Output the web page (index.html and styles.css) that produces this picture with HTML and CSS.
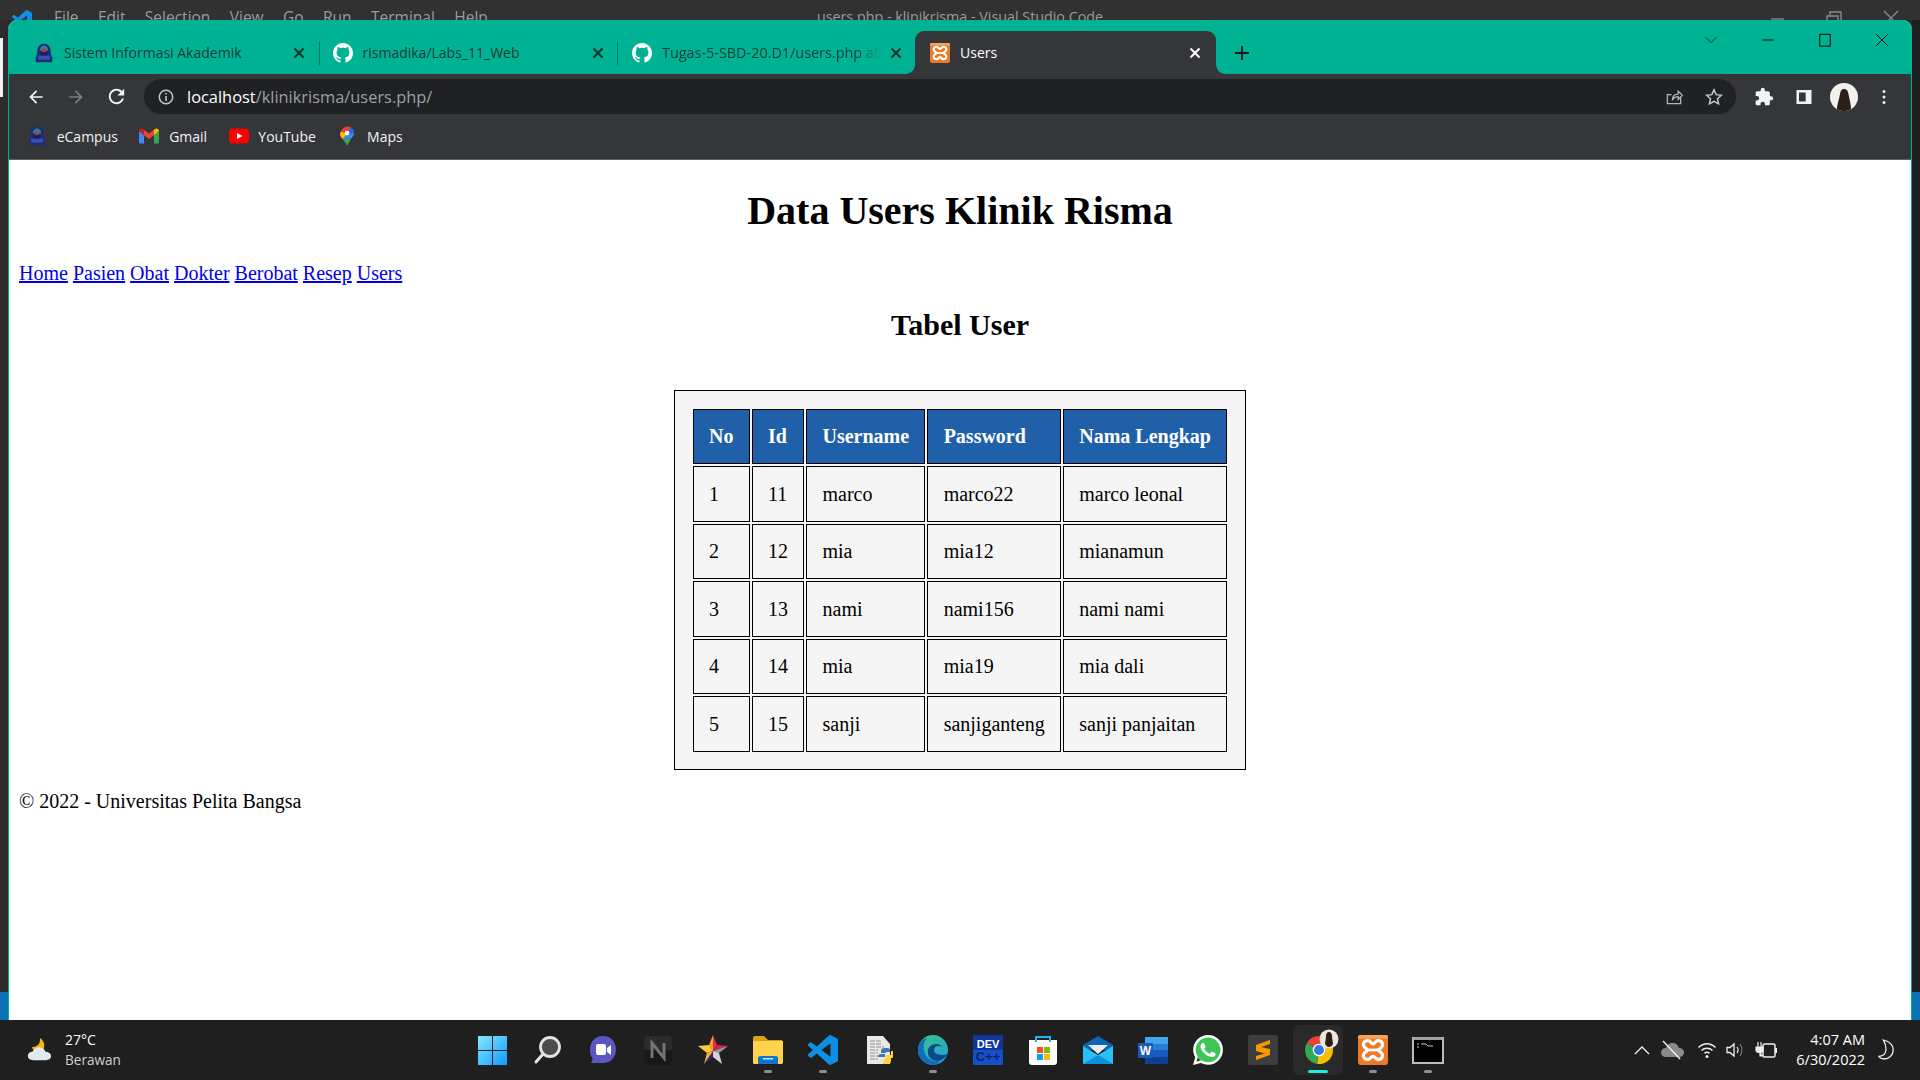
FILE: index.html
```html
<!DOCTYPE html>
<html lang="id">
<head>
<meta charset="utf-8">
<title>Users</title>
<link rel="stylesheet" href="styles.css">
</head>
<body>
<svg class="defs" aria-hidden="true">
  <symbol id="gh" viewBox="0 0 16 16"><path fill="#fff" d="M8 0C3.58 0 0 3.58 0 8c0 3.54 2.29 6.53 5.47 7.59.4.07.55-.17.55-.38 0-.19-.01-.82-.01-1.49-2.01.37-2.53-.49-2.69-.94-.09-.23-.48-.94-.82-1.13-.28-.15-.68-.52-.01-.53.63-.01 1.08.58 1.23.82.72 1.21 1.87.87 2.33.66.07-.52.28-.87.51-1.07-1.78-.2-3.64-.89-3.64-3.95 0-.87.31-1.59.82-2.15-.08-.2-.36-1.02.08-2.12 0 0 .67-.21 2.2.82.64-.18 1.32-.27 2-.27.68 0 1.36.09 2 .27 1.53-1.04 2.2-.82 2.2-.82.44 1.1.16 1.92.08 2.12.51.56.82 1.27.82 2.15 0 3.07-1.87 3.75-3.65 3.95.29.25.54.73.54 1.48 0 1.07-.01 1.93-.01 2.2 0 .21.15.46.55.38A8.013 8.013 0 0016 8c0-4.42-3.58-8-8-8z"/></symbol>
  <symbol id="vsc" viewBox="0 0 24 24"><path fill="#0f8fe3" d="M23.15 2.587L18.21.21a1.494 1.494 0 0 0-1.705.29l-9.46 8.63-4.12-3.128a.999.999 0 0 0-1.276.057L.327 7.261A1 1 0 0 0 .326 8.74L3.899 12 .326 15.26a1 1 0 0 0 .001 1.479L1.65 17.94a.999.999 0 0 0 1.276.057l4.12-3.128 9.46 8.63a1.492 1.492 0 0 0 1.704.29l4.942-2.377A1.5 1.5 0 0 0 24 20.06V3.939a1.5 1.5 0 0 0-.85-1.352zm-5.146 14.861L10.826 12l7.178-5.448v10.896z"/></symbol>
  <symbol id="xampp" viewBox="0 0 24 24"><rect width="24" height="24" rx="2.5" fill="#ee7a28"/><rect width="24" height="3" rx="1.5" fill="#f8a25c"/><path fill="none" stroke="#fff" stroke-width="2.6" stroke-linejoin="round" d="M8 4.500C10 4.500 10.500 7 12 7S14 4.500 16 4.500C19.500 4.500 20.500 7.500 19 9.500C18 10.800 16.500 11 16.500 12S18 13.200 19 14.500C20.500 16.500 19.500 19.500 16 19.500C14 19.500 13.500 17 12 17S10 19.500 8 19.500C4.500 19.500 3.500 16.500 5 14.500C6 13.200 7.500 13 7.500 12S6 10.800 5 9.500C3.500 7.500 4.500 4.500 8 4.500z"/><path stroke="#fff" stroke-width="2.200" d="M7.500 12h9"/></symbol>
  <symbol id="ecampus" viewBox="0 0 20 24"><path fill="#1f2d78" d="M10 1c5 0 8 4 8 9 0 3 1 6 2 8v5H0v-5c1-2 2-5 2-8 0-5 3-9 8-9z"/><path fill="#2f7f9f" d="M10 3c3 0 5 3 5 6H5c0-3 2-6 5-6z"/><circle cx="10" cy="9" r="2.500" fill="#c2362f"/><rect x="3" y="15" width="14" height="5" fill="#3a4fb0"/><rect x="6" y="11" width="8" height="4" fill="#15205c"/></symbol>
</svg>

<header class="vsbar">
  <svg class="vs-logo" viewBox="0 0 24 24"><use href="#vsc"/></svg>
  <nav class="vs-menu"><span>File</span><span>Edit</span><span>Selection</span><span>View</span><span>Go</span><span>Run</span><span>Terminal</span><span>Help</span></nav>
  <div class="vs-title">users.php - klinikrisma - Visual Studio Code</div>
  <div class="vs-ctrls">
    <svg viewBox="0 0 20 20"><path d="M4 11h13" stroke="#8a8a8a" stroke-width="1.400"/></svg>
    <svg viewBox="0 0 20 20"><path d="M3 8h11v11H3zM6 8V4h11v11h-3" fill="none" stroke="#8a8a8a" stroke-width="1.400"/></svg>
    <svg viewBox="0 0 20 20"><path d="M3 3l14 14M17 3L3 17" stroke="#8a8a8a" stroke-width="1.400"/></svg>
  </div>
</header>

<div class="desktop">
  <div class="edge">
    <div class="edge-note"></div>
    <div class="edge-status"></div>
  </div>

  <div class="window">
    <div class="tabstrip">
      <div class="tab">
        <svg class="fav"><use href="#ecampus"/></svg>
        <span class="tab-title">Sistem Informasi Akademik</span>
        <svg class="tab-x" viewBox="0 0 16 16"><path d="M3.500 3.500l9 9M12.500 3.500l-9 9" stroke="#12312c" stroke-width="2"/></svg>
      </div>
      <span class="tab-sep"></span>
      <div class="tab tab-next">
        <svg class="fav"><use href="#gh"/></svg>
        <span class="tab-title">rismadika/Labs_11_Web</span>
        <svg class="tab-x" viewBox="0 0 16 16"><path d="M3.500 3.500l9 9M12.500 3.500l-9 9" stroke="#12312c" stroke-width="2"/></svg>
      </div>
      <span class="tab-sep"></span>
      <div class="tab tab-next tab-last">
        <svg class="fav"><use href="#gh"/></svg>
        <span class="tab-title tab-fade">Tugas-5-SBD-20.D1/users.php at</span>
        <svg class="tab-x" viewBox="0 0 16 16"><path d="M3.500 3.500l9 9M12.500 3.500l-9 9" stroke="#12312c" stroke-width="2"/></svg>
      </div>
      <div class="tab tab-active">
        <svg class="fav"><use href="#xampp"/></svg>
        <span class="tab-title">Users</span>
        <svg class="tab-x" viewBox="0 0 16 16"><path d="M3.500 3.500l9 9M12.500 3.500l-9 9" stroke="#fff" stroke-width="2"/></svg>
      </div>
      <svg class="newtab" viewBox="0 0 16 16"><path d="M8 1v14M1 8h14" stroke="#10201d" stroke-width="2"/></svg>
      <div class="winctrls">
        <div class="winctrl"><svg viewBox="0 0 16 16"><path d="M2 5l6 6 6-6" fill="none" stroke="#10201d"/></svg></div>
        <div class="winctrl"><svg viewBox="0 0 16 16"><path d="M1.500 8h13" stroke="#000" stroke-width="1.100"/></svg></div>
        <div class="winctrl"><svg viewBox="0 0 16 16"><rect x="2" y="1.500" width="12" height="13.500" fill="none" stroke="#000" stroke-width="1.100"/></svg></div>
        <div class="winctrl"><svg viewBox="0 0 16 16"><path d="M1.500 1.500l13 13M14.500 1.500l-13 13" stroke="#000"/></svg></div>
      </div>
    </div>

    <div class="toolbar">
      <div class="tbtn"><svg viewBox="0 0 24 24"><path fill="#f1f3f4" d="M20 11H7.830l5.590-5.590L12 4l-8 8 8 8 1.410-1.410L7.830 13H20v-2z"/></svg></div>
      <div class="tbtn"><svg viewBox="0 0 24 24"><path fill="#7b7d80" d="M4 11h12.170l-5.590-5.590L12 4l8 8-8 8-1.410-1.410L16.170 13H4v-2z"/></svg></div>
      <div class="tbtn tbtn-reload"><svg viewBox="0 0 24 24"><path fill="#f1f3f4" d="M17.650 6.350C16.200 4.900 14.210 4 12 4c-4.420 0-7.990 3.580-7.990 8s3.570 8 7.990 8c3.730 0 6.840-2.550 7.730-6h-2.080c-.82 2.330-3.040 4-5.650 4-3.310 0-6-2.690-6-6s2.690-6 6-6c1.660 0 3.140.69 4.220 1.780L13 11h7V4l-2.350 2.350z"/></svg></div>
      <div class="omnibox">
        <svg class="omni-info" viewBox="0 0 20 20"><circle cx="10" cy="10" r="6.700" fill="none" stroke="#c4c7c9" stroke-width="1.500"/><path d="M10 9v5M10 6v1.600" stroke="#c4c7c9" stroke-width="1.600"/></svg>
        <span class="url"><span class="url-host">localhost</span>/klinikrisma/users.php/</span>
        <div class="omni-actions">
          <div class="tbtn"><svg viewBox="0 0 24 24"><path fill="none" stroke="#b5b7ba" stroke-width="1.500" d="M20 11v9H4V9h5M10 16c0-5 3-7.500 7-7.500V5l5 5-5 5v-3.500c-3 0-5.500 1-7 4.500z"/></svg></div>
          <div class="tbtn"><svg viewBox="0 0 24 24"><path fill="none" stroke="#c4c7c9" stroke-width="1.800" d="M12 3.500l2.600 5.700 6.200.7-4.600 4.200 1.300 6.100-5.500-3.100-5.500 3.100 1.300-6.100-4.600-4.200 6.200-.7z"/></svg></div>
        </div>
      </div>
      <div class="tb-right">
        <div class="tbtn"><svg viewBox="0 0 24 24"><path fill="#f1f3f4" d="M20.500 11H19V7c0-1.100-.9-2-2-2h-4V3.500C13 2.120 11.880 1 10.500 1S8 2.120 8 3.500V5H4c-1.100 0-1.990.9-1.990 2v3.800H3.500c1.490 0 2.700 1.210 2.700 2.700s-1.210 2.700-2.700 2.700H2V20c0 1.100.9 2 2 2h3.800v-1.500c0-1.490 1.210-2.700 2.700-2.700 1.490 0 2.700 1.210 2.700 2.700V22H17c1.100 0 2-.9 2-2v-4h1.500c1.380 0 2.500-1.120 2.500-2.500S21.880 11 20.500 11z"/></svg></div>
        <div class="tbtn"><svg viewBox="0 0 24 24"><path fill="#f1f3f4" fill-rule="evenodd" d="M3 3.500h18v17H3zM6 6.500v11h8v-11z"/></svg></div>
        <div class="tbtn"><svg class="avatar" viewBox="0 0 28 28"><circle cx="14" cy="14" r="14" fill="#f4f1ec"/><path fill="#2c1e18" d="M14 6c3 0 4 2 4.500 5 .4 3 2.500 10 2.500 15-2 1.500-4.500 2-7 2s-5-.5-7-2c0-4 2.500-11 3-15 .4-3 1.500-5 4-5z"/></svg></div>
        <div class="tbtn"><svg viewBox="0 0 24 24"><circle cx="12" cy="5.500" r="1.800" fill="#f1f3f4"/><circle cx="12" cy="12" r="1.800" fill="#f1f3f4"/><circle cx="12" cy="18.500" r="1.800" fill="#f1f3f4"/></svg></div>
      </div>
    </div>

    <div class="bookmarks">
      <div class="bm"><svg class="fav"><use href="#ecampus"/></svg><span>eCampus</span></div>
      <div class="bm"><svg class="fav" viewBox="0 0 24 18"><path fill="#4285f4" d="M0 3v13.500C0 17.300.7 18 1.500 18H6V8z"/><path fill="#34a853" d="M24 3v13.500c0 .8-.7 1.500-1.500 1.500H18V8z"/><path fill="#ea4335" d="M6 8V1.500L12 6l6-4.500V8l-6 4.500z"/><path fill="#c5221f" d="M0 3c0-2.500 2.800-3.800 4.800-2.300L6 1.500V8z"/><path fill="#fbbc04" d="M24 3c0-2.500-2.800-3.800-4.800-2.300L18 1.500V8z"/></svg><span>Gmail</span></div>
      <div class="bm"><svg class="fav" viewBox="0 0 20 20"><rect y="2.500" width="20" height="15" rx="4" fill="#f00"/><path d="M8 7l5.500 3L8 13z" fill="#fff"/></svg><span>YouTube</span></div>
      <div class="bm"><svg class="fav" viewBox="0 0 20 24"><path fill="#34a853" d="M5 16c2 3 4 5 5 8l5-9z"/><path fill="#fbbc04" d="M3 6c-2 3-2 6 2 10l5-6z"/><path fill="#4285f4" d="M10 10l-5 6 10-1c2-2 3-3 3.500-6L16 4z"/><path fill="#ea4335" d="M3 6C5 1 11-1 15 2l-5 8z"/><path fill="#1a73e8" d="M15 2c3 2 4 4 3.500 7L10 10z"/><circle cx="10" cy="8.500" r="2.800" fill="#fff"/></svg><span>Maps</span></div>
    </div>

    <main class="page">
      <h1 class="page-title">Data Users Klinik Risma</h1>
      <nav class="page-nav">
        <a href="#">Home</a>
        <a href="#">Pasien</a>
        <a href="#">Obat</a>
        <a href="#">Dokter</a>
        <a href="#">Berobat</a>
        <a href="#">Resep</a>
        <a href="#">Users</a>
      </nav>
      <h2 class="page-sub">Tabel User</h2>
      <table class="users">
        <thead>
          <tr><th>No</th><th>Id</th><th>Username</th><th>Password</th><th>Nama Lengkap</th></tr>
        </thead>
        <tbody>
          <tr><td>1</td><td>11</td><td>marco</td><td>marco22</td><td>marco leonal</td></tr>
          <tr><td>2</td><td>12</td><td>mia</td><td>mia12</td><td>mianamun</td></tr>
          <tr><td>3</td><td>13</td><td>nami</td><td>nami156</td><td>nami nami</td></tr>
          <tr><td>4</td><td>14</td><td>mia</td><td>mia19</td><td>mia dali</td></tr>
          <tr><td>5</td><td>15</td><td>sanji</td><td>sanjiganteng</td><td>sanji panjaitan</td></tr>
        </tbody>
      </table>
      <p class="page-foot">© 2022 - Universitas Pelita Bangsa</p>
    </main>
  </div>

  <div class="edge edge-right">
    <div class="edge-status"></div>
  </div>
</div>

<footer class="taskbar">
  <div class="weather">
    <svg class="weather-ico" viewBox="0 0 28 28"><path fill="#f7b500" d="M15 1c1 6-3 10-9 10 2 4 8 6 12 3 3-3 2-10-3-13z"/><path fill="#dfe9f2" d="M8 25c-4 0-6-2-6-4.500S4 16 7 16c1-3 4-5 7-5 4 0 6 2 7 5 3 0 6 2 6 4.500S25 25 21 25z"/></svg>
    <div class="weather-text"><span class="weather-temp">27°C</span><span class="weather-desc">Berawan</span></div>
  </div>

  <div class="apps">
    <div class="app"><svg viewBox="0 0 30 30"><defs><linearGradient id="win" x1="0" y1="0" x2="1" y2="1"><stop offset="0" stop-color="#86e8ff"/><stop offset="1" stop-color="#0c9bff"/></linearGradient></defs><path fill="url(#win)" d="M0 1h14v14H0zM15 1h14v14H15zM0 16h14v14H0zM15 16h14v14H15z"/></svg></div>
    <div class="app"><svg viewBox="0 0 30 30"><circle cx="17" cy="12" r="9.500" fill="#4c4c4c" stroke="#e3e3e3" stroke-width="2.800"/><path d="M10 19l-7 8" stroke="#e3e3e3" stroke-width="3" stroke-linecap="round"/></svg></div>
    <div class="app"><svg viewBox="0 0 30 30"><path fill="#5b57c2" d="M15 1c8 0 13 6 13 13.500S23 28 15 28H3c1-1.500 1.500-3 1.500-5C2.500 21 2 18 2 14.500 2 7 7 1 15 1z"/><rect x="8" y="9" width="10" height="11" rx="2" fill="#fff"/><path d="M19 13l4-3v10l-4-3z" fill="#fff"/></svg></div>
    <div class="app"><svg viewBox="0 0 30 30"><path fill="#2b2b2b" d="M3 1h24l2 3v11H1V4z"/><path fill="#181818" d="M1 15h28v10l-2 5H3l-2-5z"/><path fill="none" stroke="#747474" stroke-width="3" d="M9 23V8l12 15V8"/></svg></div>
    <div class="app"><svg viewBox="0 0 30 30"><path fill="#ffc83a" d="M0 11l11-1 4 6-6 2z"/><path fill="#f5a91f" d="M15 0v16l-4-6z"/><path fill="#e0285a" d="M15 0l4 10-4 6z"/><path fill="#d8224e" d="M19 10l11 1-15 5z"/><path fill="#9a9a9a" d="M30 11l-9 7-6-2z"/><path fill="#d5d5d5" d="M21 18l3 11-9-7v-6z"/><path fill="#5a2ca0" d="M15 16v6l-9 7z"/><path fill="#3a1f80" d="M15 22l-9 7 3-11 6-2z"/><path fill="#f3b52a" d="M9 18l-3 11 9-13z"/></svg></div>
    <div class="app app-open"><svg viewBox="0 0 30 30"><path fill="#d9a40f" d="M0 3c0-1 1-2 2-2h9l4 4h14v4H0z"/><path fill="#ffd34e" d="M0 6h30v21c0 1-1 2-1 2H1c-1 0-1-1-1-2z"/><path fill="#0f75c9" d="M5 23c0-1 1-2 2-2h16c1 0 2 1 2 2v6H5z"/><rect x="10" y="23" width="10" height="1.500" fill="#bfe4ff"/></svg><i class="ind"></i></div>
    <div class="app app-open"><svg viewBox="0 0 24 24"><use href="#vsc"/></svg><i class="ind"></i></div>
    <div class="app"><svg viewBox="0 0 30 30"><path fill="#e8e8e8" d="M4 1h16l7 8v20H4z"/><path stroke="#8f8f8f" stroke-dasharray="5 1" d="M7 6h11M7 9h11M7 12h14M7 15h8M7 18h8M7 21h8M7 24h8"/><path fill="#3b78b0" d="M22 13c-3 0-4 1-4 3v2h4v1h-4c-2 0-3 1-3 3h7v-3c0-1 1-2 2-2h3v-2c0-2-2-2-5-2z"/><path fill="#ffd43b" d="M24 29c3 0 4-1 4-3v-3h-4c-1 0-3 .5-3 2v1h-1v3z"/><path fill="#ffd43b" d="M28 16h2v6c0 1-1 1-2 1h-5v-3h5z"/></svg></div>
    <div class="app app-open"><svg viewBox="0 0 30 30"><defs><linearGradient id="edge1" x1="0" y1="0" x2="1" y2="1"><stop offset="0" stop-color="#3ac77c"/><stop offset="1" stop-color="#1c9ee0"/></linearGradient></defs><circle cx="15" cy="15" r="15" fill="url(#edge1)"/><path fill="#0f6cc0" d="M15 30C6 30 0 23 0 15 0 9 4 4 9 3c-3 3-4 7-3 12 1 7 6 11 11 11 3 0 5-1 6-1-2 3-5 5-8 5z"/><path fill="#0b4a8a" d="M23 25c-6 2-12 0-13-7-1-5 3-9 8-9 3 0 5 1 6 3-3-2-8-1-8 3 0 4 5 5 9 5 3 0 4-1 5-2-1 3-3 5-7 7z"/></svg><i class="ind"></i></div>
    <div class="app"><svg viewBox="0 0 30 30"><rect width="30" height="30" fill="#10359a"/><rect y="15" width="30" height="15" fill="#1550c8"/><text x="15" y="12.500" class="ico-dev">DEV</text><text x="15" y="26" class="ico-cpp">C++</text></svg></div>
    <div class="app"><svg viewBox="0 0 30 30"><path fill="#fff" d="M1 5h28v22c0 2-1 3-3 3H4c-2 0-3-1-3-3z"/><path fill="none" stroke="#1cb5f0" stroke-width="2" d="M8 7V2h14v5"/><rect x="9" y="12" width="6" height="6" fill="#f25022"/><rect x="16" y="12" width="6" height="6" fill="#7fba00"/><rect x="9" y="19" width="6" height="6" fill="#00a4ef"/><rect x="16" y="19" width="6" height="6" fill="#ffb900"/></svg></div>
    <div class="app"><svg viewBox="0 0 30 30"><path fill="#0f63b5" d="M15 1L0 10v5h30v-5z"/><path fill="#e9eef4" d="M5 10h20l-10 9z"/><path fill="#29c0f4" d="M0 11l15 9 15-9v18H0z"/><path fill="#0f8fdc" d="M0 29l15-9 15 9z"/></svg></div>
    <div class="app"><svg viewBox="0 0 30 30"><rect x="7" y="2" width="23" height="27" rx="1.500" fill="#2b7cd3"/><rect x="7" y="2" width="23" height="7" fill="#41a5ee"/><rect x="7" y="15" width="23" height="7" fill="#185abd"/><rect x="7" y="22" width="23" height="7" fill="#103f91"/><rect y="8" width="15" height="15" rx="1" fill="#185abd"/><text x="7.500" y="20" class="ico-w">W</text></svg></div>
    <div class="app"><svg viewBox="0 0 24 24"><circle cx="12" cy="12" r="10.500" fill="#3ec654"/><path fill="#fff" d="M17.472 14.382c-.297-.149-1.758-.867-2.030-.967-.273-.099-.471-.148-.670.150-.197.297-.767.966-.940 1.164-.173.199-.347.223-.644.075-.297-.150-1.255-.463-2.390-1.475-.883-.788-1.480-1.761-1.653-2.059-.173-.297-.018-.458.130-.606.134-.133.298-.347.446-.520.149-.174.198-.298.298-.497.099-.198.050-.371-.025-.520-.075-.149-.669-1.612-.916-2.207-.242-.579-.487-.500-.669-.510-.173-.008-.371-.010-.570-.010-.198 0-.520.074-.792.372-.272.297-1.040 1.016-1.040 2.479 0 1.462 1.065 2.875 1.213 3.074.149.198 2.096 3.200 5.077 4.487.709.306 1.262.489 1.694.625.712.227 1.360.195 1.871.118.571-.085 1.758-.719 2.006-1.413.248-.694.248-1.289.173-1.413-.074-.124-.272-.198-.570-.347m-5.421 7.403h-.004a9.870 9.870 0 01-5.031-1.378l-.361-.214-3.741.982.998-3.648-.235-.374a9.860 9.860 0 01-1.510-5.260c.001-5.450 4.436-9.884 9.888-9.884 2.640 0 5.122 1.030 6.988 2.898a9.825 9.825 0 012.893 6.994c-.003 5.450-4.437 9.884-9.885 9.884m8.413-18.297A11.815 11.815 0 0012.050 0C5.495 0 .160 5.335.157 11.892c0 2.096.547 4.142 1.588 5.945L.057 24l6.305-1.654a11.882 11.882 0 005.683 1.448h.005c6.554 0 11.890-5.335 11.893-11.893a11.821 11.821 0 00-3.480-8.413z"/></svg></div>
    <div class="app"><svg viewBox="0 0 30 30"><rect width="30" height="30" rx="2" fill="#3d3d3d"/><path fill="#ff9800" d="M22 5L8 10v6l14 4v-6L13 12l9-3zM8 25l14-5v-3L8 21z"/></svg></div>
    <div class="app app-chrome"><svg viewBox="0 0 30 30"><path fill="#ea4335" d="M16 15L3.880 8A14 14 0 0 1 29.500 11z"/><path fill="#fbbc04" d="M16 15L29.500 11A14 14 0 0 1 14 28.900z"/><path fill="#34a853" d="M16 15L14 28.900A14 14 0 0 1 3.880 8z"/><circle cx="16" cy="15" r="6.300" fill="#fff"/><circle cx="16" cy="15" r="5" fill="#2a7de1"/><circle cx="26" cy="4" r="9.500" fill="#ece6df"/><path fill="#2c1e18" d="M26-3c2 0 3 2 3 4 0 3 1 6 1 8-1 1-2 3-4 3s-3-2-4-3c0-2 1-5 1-8 0-2 1-4 3-4z"/></svg><i class="ind ind-live"></i></div>
    <div class="app app-open"><svg viewBox="0 0 24 24"><use href="#xampp"/></svg><i class="ind"></i></div>
    <div class="app app-open"><svg viewBox="0 0 30 30"><rect y="3" width="30" height="25" fill="#000" stroke="#b8bcc0" stroke-width="2"/><rect y="2" width="30" height="3" fill="#9aa0a5"/><path d="M4 9h2M8 9h5l2 2h5M4 12h2" stroke="#c8c8c8"/></svg><i class="ind"></i></div>
  </div>

  <div class="tray">
    <svg class="tray-ico" viewBox="0 0 20 20"><path d="M3 14l7-7 7 7" fill="none" stroke="#eee" stroke-width="1.300"/></svg>
    <svg class="tray-ico tray-cloud" viewBox="0 0 24 20"><path fill="#8a8a8a" d="M6 17c-3 0-5-2-5-4.500S3 8 6 8c1-3 3-5 6-5 4 0 6 2 7 5 3 0 5 2 5 4.500S22 17 19 17z"/><path d="M3 1l17 18" stroke="#eee" stroke-width="1.500"/></svg>
    <svg class="tray-ico" viewBox="0 0 20 20"><path d="M1.500 7.500c5-5 12-5 17 0M4.500 10.500c3-3 8-3 11 0M7.500 13.300c1.500-1.200 3.500-1.200 5 0" fill="none" stroke="#eee" stroke-width="1.500"/><circle cx="10" cy="16.500" r="1.500" fill="#eee"/></svg>
    <svg class="tray-ico tray-sound" viewBox="0 0 20 20"><path d="M2 7.500h3l4-3.500v12l-4-3.500H2z" fill="none" stroke="#eee" stroke-width="1.300"/><path d="M12 7c1.300 1.700 1.300 4.300 0 6" fill="none" stroke="#eee" stroke-width="1.200"/><path d="M15 4c2.500 3.500 2.500 8.500 0 12" fill="none" stroke="#777" stroke-width="1.200"/></svg>
    <svg class="tray-ico tray-batt" viewBox="0 0 24 20"><rect x="8" y="4" width="12" height="13" rx="1.500" fill="none" stroke="#eee" stroke-width="1.500"/><rect x="20" y="8" width="2" height="5" fill="#eee"/><path d="M1 7h7v3c0 1.500-1.500 2.500-3.500 2.500S1 11.500 1 10zM3 2v5M6 2v5M5 12v4h3" fill="#eee" stroke="#eee" stroke-width="1.200"/></svg>
    <div class="clock"><span>4:07 AM</span><span>6/30/2022</span></div>
    <svg class="tray-moon" viewBox="0 0 20 24"><path d="M7 1c6 1 11 5 11 11 0 6-5 10-10 10-3 0-5-1-6-3 5 0 8-3 8-8 0-4-1-7-3-10z" fill="none" stroke="#eee" stroke-width="1.400"/></svg>
  </div>
</footer>
</body>
</html>
```

FILE: styles.css
```css
* { box-sizing: border-box; }
html, body { margin: 0; padding: 0; }
body {
  width: 1920px;
  height: 1080px;
  overflow: hidden;
  display: flex;
  flex-direction: column;
  background: #2b2b2b;
  font-family: "Open Sans", "Noto Sans", sans-serif;
}
.defs { position: absolute; width: 0; height: 0; }

/* VS Code window peeking out behind the browser */
.vsbar {
  height: 20px;
  flex: none;
  display: flex;
  background: #313131;
  color: #9b9b9b;
  font-size: 15.500px;
  line-height: 20px;
  overflow: hidden;
  position: relative;
}
.vs-logo { width: 20px; height: 20px; margin: 10px 0 0 12px; flex: none; }
.vs-menu { display: flex; margin: 7px 0 0 22px; gap: 19.400px; height: 28px; }
.vs-title { position: absolute; left: 0; right: 0; top: 7px; text-align: center; font-size: 14.300px; }
.vs-ctrls { margin: 8px 19px 0 auto; display: flex; gap: 37px; }
.vs-ctrls svg { width: 20px; height: 20px; }

.desktop { flex: 1; display: flex; min-height: 0; }
.edge {
  width: 8px;
  flex: none;
  display: flex;
  flex-direction: column;
  background: #2c2c2c;
}
.edge-right { background: #1e1e1e; }
.edge-note { width: 3px; height: 59px; margin-top: 18px; background: #f2f2f2; }
.edge-status { height: 28px; margin-top: auto; background: #0b72b5; }

/* Browser window */
.window {
  flex: 1;
  min-width: 0;
  display: flex;
  flex-direction: column;
  border-left: 1px solid #00b294;
  border-right: 1px solid #00b294;
  border-radius: 9px 9px 0 0;
  overflow: hidden;
  background: #fff;
}
.tabstrip {
  height: 54px;
  flex: none;
  display: flex;
  align-items: flex-end;
  padding-left: 11px;
  background: #00b294;
}
.tab {
  width: 298.500px;
  height: 43px;
  flex: none;
  display: flex;
  align-items: center;
  gap: 10px;
  padding: 0 11.500px 0 14px;
  color: #123d37;
  font-size: 14px;
}
.tab-next { width: 297.500px; padding-left: 13px; }
.tab-last { width: 296.500px; padding-left: 14px; padding-right: 10.500px; }
.tab-sep { width: 1px; height: 24px; margin-bottom: 9px; background: #0a6f5f; flex: none; }
.tab-title { flex: 1; min-width: 0; white-space: nowrap; overflow: hidden; }
.tab-last .tab-title { font-size: 14.400px; }
.tab-fade { -webkit-mask-image: linear-gradient(to right, #000 195px, transparent 218px); mask-image: linear-gradient(to right, #000 195px, transparent 218px); }
.fav { width: 20px; height: 20px; flex: none; }
.tab-x { width: 16px; height: 16px; flex: none; }
.tab-active {
  width: 301px;
  padding: 0 12.500px 0 15.500px;
  position: relative;
  background: #35363a;
  border-radius: 9px 9px 0 0;
  color: #fff;
}
.tab-active::before, .tab-active::after {
  content: "";
  position: absolute;
  bottom: 0;
  width: 9px;
  height: 9px;
}
.tab-active::before { right: 100%; background: radial-gradient(circle at 0 0, transparent 8.500px, #35363a 9px); }
.tab-active::after { left: 100%; background: radial-gradient(circle at 100% 0, transparent 8.500px, #35363a 9px); }
.newtab { width: 16px; height: 16px; flex: none; margin: 0 0 13.500px 18.500px; }
.winctrls { margin: 0 1px 0 auto; display: flex; align-self: flex-start; }
.winctrl { width: 57px; height: 40px; display: flex; align-items: center; justify-content: center; }
.winctrl svg { width: 14px; height: 14px; }

.toolbar {
  height: 40px;
  flex: none;
  display: flex;
  align-items: flex-end;
  padding: 0 7px;
  background: #35363a;
}
.tbtn {
  width: 40px;
  height: 35px;
  flex: none;
  display: flex;
  align-items: center;
  justify-content: center;
}
.tbtn svg { width: 20px; height: 20px; }
.tbtn-reload svg { width: 23px; height: 23px; }
.tbtn svg.avatar { width: 28px; height: 28px; }
.omnibox {
  flex: 1;
  min-width: 0;
  height: 35px;
  margin-left: 8px;
  display: flex;
  align-items: center;
  padding: 0 2px 0 12px;
  background: #202124;
  border-radius: 18px;
}
.omni-info { width: 20px; height: 20px; flex: none; }
.url { margin-left: 11px; color: #9aa0a6; font-size: 16.400px; }
.url-host { color: #fff; }
.omni-actions { margin-left: auto; display: flex; }
.tb-right { display: flex; margin-left: 8px; }

.bookmarks {
  height: 46px;
  flex: none;
  display: flex;
  align-items: center;
  gap: 21.500px;
  padding: 0 0 1px 18px;
  background: #35363a;
  border-bottom: 1px solid #5f6063;
  color: #f1f3f4;
  font-size: 14px;
}
.bm { display: flex; align-items: center; gap: 9.700px; }

/* Page content */
.page {
  flex: 1;
  min-height: 0;
  padding: 0 10px;
  background: #fff;
  color: #000;
  font-family: "Liberation Serif", "Times New Roman", serif;
  font-size: 20px;
}
.page-title { margin: 26.800px 0 28px; font-size: 40px; text-align: center; }
.page-nav a { color: #0000ee; }
.page-sub { margin: 23.700px 0 0; font-size: 30px; text-align: center; }
.users {
  margin: 48px auto 0;
  padding: 15.500px;
  border: 1px solid #000;
  border-spacing: 2px;
  background: #f5f5f5;
}
.users th, .users td {
  padding: 15.250px;
  border: 1px solid #000;
  text-align: left;
}
.users th { background: #2060a9; color: #fff; }
.page-foot { margin: 20px 0 0; }

/* Windows taskbar */
.taskbar {
  height: 60px;
  flex: none;
  display: grid;
  grid-template-columns: 1fr auto 1fr;
  background: #1f1f1f;
  color: #fff;
}
.weather { display: flex; align-items: center; padding-left: 26px; gap: 13px; }
.weather-ico { width: 26px; height: 26px; flex: none; }
.weather-text { display: flex; flex-direction: column; font-size: 14px; line-height: 20.500px; }
.weather-desc { color: #cfcfcf; font-size: 13.600px; }
.apps { display: flex; }
.app {
  width: 55px;
  height: 60px;
  padding-top: 15px;
  display: flex;
  flex-direction: column;
  align-items: center;
}
.app svg { width: 30px; height: 30px; flex: none; overflow: visible; }
.app-chrome {
  width: 50px;
  height: 50px;
  margin: 5px 2.500px;
  padding-top: 10px;
  background: #2a2a2a;
  border-radius: 6px;
}
.ind { width: 8px; height: 3px; margin-top: 5px; border-radius: 2px; background: #8f8f8f; }
.ind-live { width: 20px; background: #1cf0d8; }
.ico-dev { font: bold 11px "Liberation Sans", sans-serif; fill: #fff; text-anchor: middle; }
.ico-cpp { font: bold 13px "Liberation Sans", sans-serif; fill: #0b1f6b; text-anchor: middle; }
.ico-w { font: bold 12px "Liberation Sans", sans-serif; fill: #fff; text-anchor: middle; }

.tray { display: flex; align-items: center; justify-content: flex-end; }
.tray-ico { width: 20px; height: 20px; flex: none; margin-right: 8px; }
.tray-cloud { width: 24px; margin-right: 13px; }
.tray-sound { margin-right: 10px; }
.tray-batt { width: 24px; margin-right: 9px; }
.clock {
  display: flex;
  flex-direction: column;
  align-items: flex-end;
  margin-left: 8px;
  font-size: 14.500px;
  line-height: 20px;
}
.tray-moon { width: 18px; height: 22px; margin: 0 25px 0 12px; flex: none; }
```
